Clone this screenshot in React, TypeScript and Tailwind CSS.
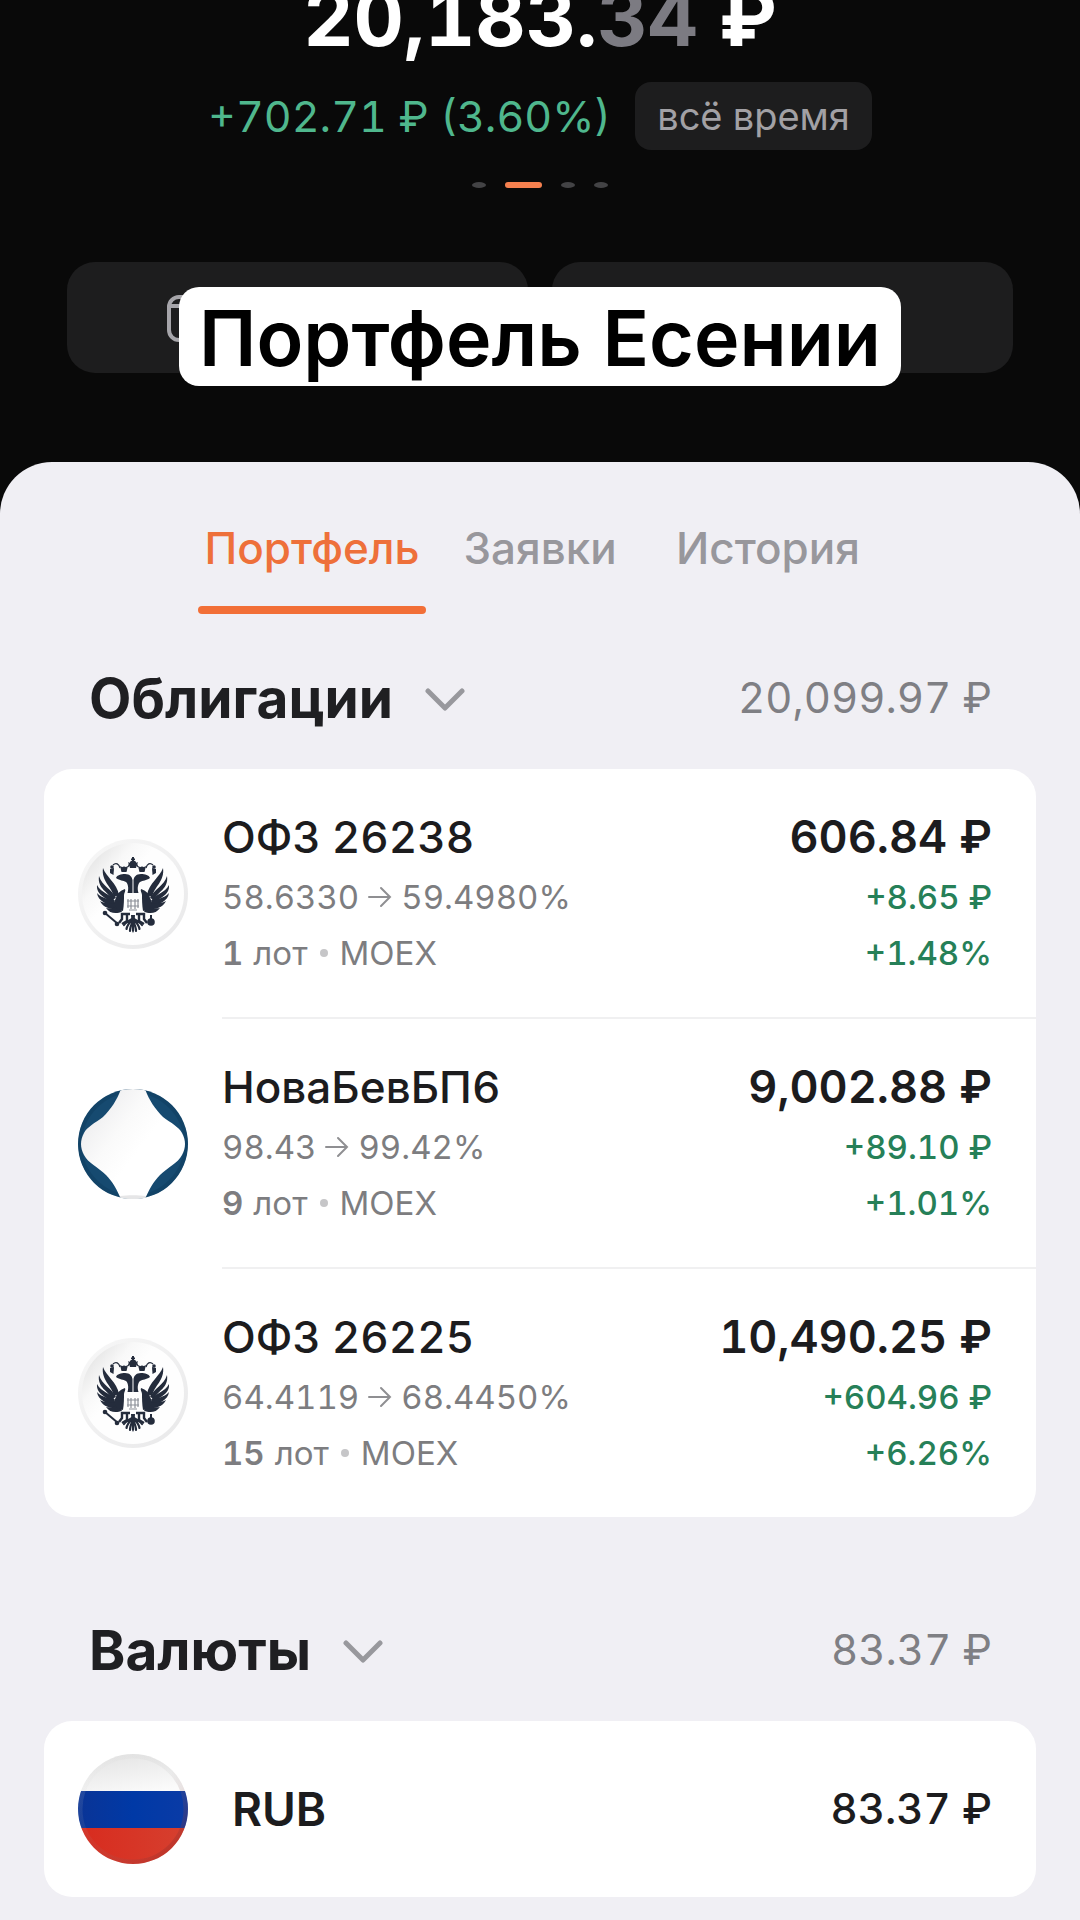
import { useState } from "react";

type Position = {
  title: string;
  logo: "eagle" | "nova";
  from: string;
  to: string;
  lots: number;
  exchange: string;
  value: string;
  gain: string;
  percent: string;
};

const bonds: Position[] = [
  {
    title: "ОФЗ 26238",
    logo: "eagle",
    from: "58.6330",
    to: "59.4980%",
    lots: 1,
    exchange: "MOEX",
    value: "606.84 ₽",
    gain: "+8.65 ₽",
    percent: "+1.48%",
  },
  {
    title: "НоваБевБП6",
    logo: "nova",
    from: "98.43",
    to: "99.42%",
    lots: 9,
    exchange: "MOEX",
    value: "9,002.88 ₽",
    gain: "+89.10 ₽",
    percent: "+1.01%",
  },
  {
    title: "ОФЗ 26225",
    logo: "eagle",
    from: "64.4119",
    to: "68.4450%",
    lots: 15,
    exchange: "MOEX",
    value: "10,490.25 ₽",
    gain: "+604.96 ₽",
    percent: "+6.26%",
  },
];

const tabs = ["Портфель", "Заявки", "История"];

// One half of the eagle, mirrored for the other side
function EagleHalf() {
  return (
    <g>
      {/* wing feathers */}
      <path d="M25 29C28 38 39 44 41 56L36 58C34 48 23 42 25 29Z" />
      <path d="M21 37C24 47 34 50 38 59L34 61C31 53 19 50 21 37Z" />
      <path d="M19 46C23 54 33 55 37 62L34 64.500C30 59 18 57 19 46Z" />
      <path d="M19 54C24 60 32 59 38 64L36 68C30 65 20 63 19 54Z" />
      <path d="M22 62C27 65 33 63 40 66L40 70.500C33 70 25 69 22 62Z" />
      <path d="M28 69C33 70 37 68 43 69L44 72.500C39 75 32 75 28 69Z" />
      <path d="M47 50C42 52 39 54 38 59L36 63L39 70L45 72C46 66 46 60 46 56C46 54 48 52 47 50Z" />
      {/* head and neck */}
      <path d="M38 39C39 36 43 35 47 35C52 35 54 38 54.500 41V54H49.500C51 49 50 45 48 43C45 41 42 42 38 39Z" />
      {/* crowns */}
      <circle cx="46" cy="30" r="2.500" />
      <path d="M42 27L43.500 33H48.500L50 27L46 29Z" />
      <circle cx="34" cy="28" r="1.800" />
      <path d="M32 30L36 29L35.500 36L32 34Z" />
      <path d="M35 26C38 23 41 25 42 29M50 28L52 24" fill="none" stroke="#242c3c" strokeWidth="1.200" />
      {/* legs and tail */}
      <path d="M52 75H44V80L41 84M49 76V82L44 85" fill="none" stroke="#242c3c" strokeWidth="2.400" />
      <path
        d="M54 80C51 82 48 83 46 86M54 81C51 84 49 87 48.500 90M55 82C53 86 52 89 52 92"
        fill="none"
        stroke="#242c3c"
        strokeWidth="2.200"
        strokeLinecap="round"
      />
    </g>
  );
}

function EagleLogo() {
  return (
    <svg viewBox="0 0 110 110" className="size-full" aria-hidden="true">
      <defs>
        <linearGradient id="eagle-face" x1="0" y1="0.1" x2="0.7" y2="0.7">
          <stop offset="0" stopColor="#dedede" />
          <stop offset="0.35" stopColor="#f8f8f8" />
          <stop offset="0.55" stopColor="#fefefe" />
        </linearGradient>
        <linearGradient id="eagle-rim" x1="0" y1="0" x2="1" y2="1">
          <stop offset="0" stopColor="#f8f8f8" />
          <stop offset="1" stopColor="#e8e8e9" />
        </linearGradient>
      </defs>
      <circle cx="55" cy="55" r="55" fill="url(#eagle-rim)" />
      <circle cx="55" cy="55" r="51" fill="url(#eagle-face)" />
      <g fill="#242c3c">
        <EagleHalf />
        <g transform="translate(110 0) scale(-1 1)">
          <EagleHalf />
        </g>
        {/* top crown */}
        <circle cx="55" cy="25" r="3.500" />
        <path d="M50 23L52 29H58L60 23L55 26ZM54 18H56V24H54ZM53 19.500H57V21H53Z" />
        <path d="M53 76H57L56 92L55 94L54 92Z" />
        {/* sceptre and orb */}
        <path d="M27 74L40 85" fill="none" stroke="#242c3c" strokeWidth="2" />
        <circle cx="27" cy="74" r="2.300" />
        <circle cx="39" cy="85" r="2.300" />
        <circle cx="73" cy="83" r="3.800" />
        <path d="M72 76H74V80H72Z" />
      </g>
      {/* shield */}
      <g fill="none" stroke="#8b8f98" strokeWidth="1.200">
        <path d="M50 60V69M53 60V70M57 60V70M60 60V69M49 62H61M49 67H61M51 71H59" />
      </g>
    </svg>
  );
}

function NovaLogo() {
  return (
    <svg viewBox="0 0 110 110" className="size-full" aria-hidden="true">
      <defs>
        <clipPath id="nova-disc">
          <circle cx="55" cy="55" r="55" />
        </clipPath>
        <linearGradient id="nova-face" x1="0.1" y1="0.1" x2="0.6" y2="0.5">
          <stop offset="0" stopColor="#ebebed" />
          <stop offset="0.6" stopColor="#fafafa" />
          <stop offset="1" stopColor="#ffffff" />
        </linearGradient>
      </defs>
      <g clipPath="url(#nova-disc)">
        <rect width="110" height="110" fill="#164a70" />
        <circle cx="55" cy="55" r="53" fill="none" stroke="#0b3453" strokeWidth="4" strokeOpacity="0.3" />
        <path
          d="M43 0C39 11 33 20 25 28C17 34 9 38 6 44C2 51 2 59 6 66C10 74 20 78 28 86C35 93 39 101 43 110H67C71 101 75 93 82 86C90 78 100 74 104 66C108 59 108 51 104 44C101 38 93 34 85 28C77 20 71 11 67 0Z"
          fill="url(#nova-face)"
        />
        <path d="M42 107C50 106 60 106 68 107V110H42Z" fill="#e6e6e7" />
      </g>
    </svg>
  );
}

function RussiaFlag() {
  return (
    <svg viewBox="0 0 110 110" className="size-full" aria-hidden="true">
      <defs>
        <clipPath id="flag-disc">
          <circle cx="55" cy="55" r="55" />
        </clipPath>
        <linearGradient id="flag-white" x1="0.1" y1="0" x2="0.7" y2="1">
          <stop offset="0" stopColor="#e2e2e2" />
          <stop offset="1" stopColor="#fbfbfb" />
        </linearGradient>
        <linearGradient id="flag-blue" x1="0" y1="0" x2="1" y2="0">
          <stop offset="0" stopColor="#0a3496" />
          <stop offset="0.5" stopColor="#0039a6" />
          <stop offset="1" stopColor="#0a3ba6" />
        </linearGradient>
        <linearGradient id="flag-red" x1="0" y1="0" x2="1" y2="0">
          <stop offset="0" stopColor="#d82b1e" />
          <stop offset="1" stopColor="#d6402f" />
        </linearGradient>
        <linearGradient id="flag-rim" x1="0" y1="0" x2="1" y2="1">
          <stop offset="0" stopColor="#ffffff" stopOpacity="0.15" />
          <stop offset="0.5" stopColor="#888888" stopOpacity="0.08" />
          <stop offset="1" stopColor="#900000" stopOpacity="0.4" />
        </linearGradient>
      </defs>
      <g clipPath="url(#flag-disc)">
        <rect width="110" height="38" fill="url(#flag-white)" />
        <rect y="37" width="110" height="37" fill="url(#flag-blue)" />
        <rect y="74" width="110" height="36" fill="url(#flag-red)" />
        <circle cx="55" cy="55" r="53" fill="none" stroke="url(#flag-rim)" strokeWidth="5" />
      </g>
    </svg>
  );
}

function SectionHeader({ title, total }: { title: string; total: string }) {
  return (
    <div className="flex items-center justify-between pr-11 pl-[45px]">
      <h2>
        <button type="button" className="flex items-center gap-8 text-[55px] leading-[68px] font-bold text-[#1f1f22]">
          {title}
          <svg viewBox="0 0 40 24" className="mt-1 h-6 w-10" fill="none" aria-hidden="true">
            <path d="M3 3L20 20L37 3" stroke="#98989d" strokeWidth="5" strokeLinecap="round" strokeLinejoin="round" />
          </svg>
        </button>
      </h2>
      <span className="text-[42px] leading-[68px] text-[#7f7f84]">{total}</span>
    </div>
  );
}

function PositionRow({ item }: { item: Position }) {
  return (
    <li className="group flex items-stretch pl-[34px]">
      <div className="mr-[34px] flex w-[110px] shrink-0 items-center">
        <div className="size-[110px]">{item.logo === "eagle" ? <EagleLogo /> : <NovaLogo />}</div>
      </div>
      <div className="flex flex-1 justify-between border-b-2 border-[#f0f0f1] pt-10 pr-11 pb-9 group-last:border-b-0">
        <div>
          <h3 className="mb-1 text-[44px] leading-[56px] font-medium text-[#1c1c1e]">{item.title}</h3>
          <p className="flex items-center gap-2 text-[33px] leading-[56px] text-[#7d7d80]">
            {item.from}
            <svg viewBox="0 0 26 24" className="h-6 w-[26px]" fill="none" aria-label="→">
              <path d="M2 12H23M14 3L23 12L14 21" stroke="#8f8f92" strokeWidth="2" strokeLinecap="round" />
            </svg>
            {item.to}
          </p>
          <p className="flex items-center text-[33px] leading-[56px] text-[#7d7d80]">
            <b className="mr-[10px] font-semibold">{item.lots}</b> лот
            <i className="mx-3 size-2 rounded-full bg-[#c6c6c8]" />
            {item.exchange}
          </p>
        </div>
        <div className="text-right">
          <p className="mb-1 text-[45px] leading-[56px] font-semibold text-[#1c1c1e]">{item.value}</p>
          <p className="text-[33px] leading-[56px] font-medium text-[#268058]">{item.gain}</p>
          <p className="text-[33px] leading-[56px] font-medium text-[#268058]">{item.percent}</p>
        </div>
      </div>
    </li>
  );
}

export default function App() {
  const [active, setActive] = useState(tabs[0]);

  return (
    <main className="min-h-screen overflow-hidden bg-[#090909] font-['Inter',sans-serif] tabular-nums">
      <header className="flex flex-col items-center">
        <h1 className="-mt-7 text-[78px] leading-[92px] font-bold text-white">
          20,183.<span className="text-[#7c7b82]">34</span> ₽
        </h1>
        <div className="mt-[18px] flex items-center gap-6">
          <span className="text-[43px] leading-[68px] text-[#4fb78d]">+702.71 ₽ (3.60%)</span>
          <button type="button" className="h-[68px] rounded-2xl bg-[#1d1d1e] px-[22px] text-[38px] text-[#a2a1a5]">
            всё время
          </button>
        </div>
        <div className="mt-8 flex items-center gap-[19px]">
          <i className="h-[6px] w-[14px] rounded-[50%] bg-[#434345]" />
          <i className="h-[6px] w-[37px] rounded-full bg-[#f5804f]" />
          <i className="h-[6px] w-[14px] rounded-[50%] bg-[#434345]" />
          <i className="h-[6px] w-[14px] rounded-[50%] bg-[#434345]" />
        </div>
      </header>

      <section className="relative mt-[74px] px-[67px]">
        <div className="grid grid-cols-2 gap-6">
          <button type="button" aria-label="Счёт" className="flex h-[111px] items-center rounded-[28px] bg-[#1d1d1e] pl-[99px]">
            <svg viewBox="0 0 48 48" className="size-12" fill="none" stroke="#a6a5aa" strokeWidth="4" aria-hidden="true">
              <rect x="3" y="3" width="42" height="43" rx="10" />
              <path d="M3 12H45" />
            </svg>
          </button>
          <button type="button" aria-label="Ещё" className="h-[111px] rounded-[28px] bg-[#1d1d1e]" />
        </div>
        <div className="absolute inset-x-0 top-[25px] flex justify-center">
          <p className="rounded-[20px] bg-white px-5 pt-1 text-[77px] leading-[95px] font-semibold whitespace-nowrap text-black">
            Портфель Есении
          </p>
        </div>
      </section>

      <section className="mt-[89px] rounded-t-[52px] bg-[#f0eff4] px-11 pb-6">
        <nav className="flex justify-center pt-[54px]" role="tablist">
          {tabs.map((tab) => (
            <button
              key={tab}
              type="button"
              role="tab"
              aria-selected={tab === active}
              onClick={() => setActive(tab)}
              className="group flex w-[228px] flex-col items-center text-[44px] leading-[64px] font-medium text-[#98979c] aria-selected:text-[#ee703a]"
            >
              {tab}
              <span className="mt-[26px] h-2 w-full rounded-full group-aria-selected:bg-[#f26f37]" />
            </button>
          ))}
        </nav>

        <div className="mt-[50px]">
          <SectionHeader title="Облигации" total="20,099.97 ₽" />
          <ul className="mt-[37px] overflow-hidden rounded-[28px] bg-white">
            {bonds.map((item) => (
              <PositionRow key={item.title} item={item} />
            ))}
          </ul>
        </div>

        <div className="mt-[99px]">
          <SectionHeader title="Валюты" total="83.37 ₽" />
          <ul className="mt-[37px] rounded-[28px] bg-white">
            <li className="flex items-center py-[33px] pr-11 pl-[34px]">
              <div className="size-[110px]">
                <RussiaFlag />
              </div>
              <h3 className="ml-11 text-[46px] leading-[56px] font-semibold text-[#1c1c1e]">RUB</h3>
              <span className="ml-auto text-[42px] leading-[56px] font-medium text-[#1c1c1e]">83.37 ₽</span>
            </li>
          </ul>
        </div>
      </section>
    </main>
  );
}
